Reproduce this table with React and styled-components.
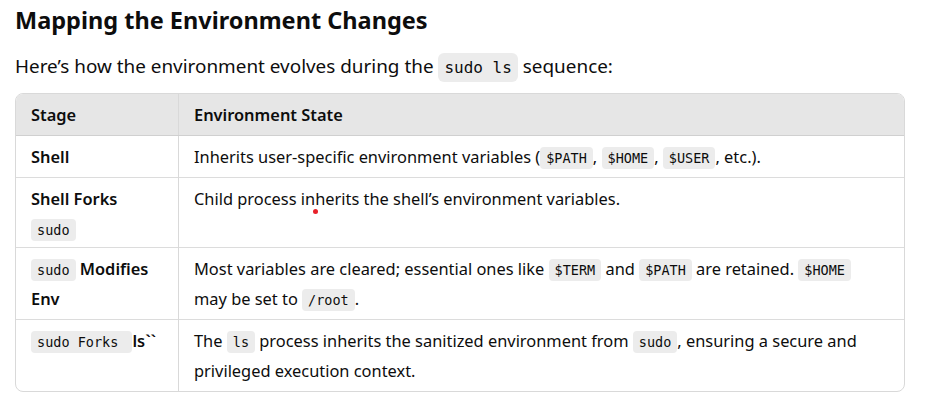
import React from 'react';
import styled, { createGlobalStyle } from 'styled-components';

const GlobalStyle = createGlobalStyle`
  html, body {
    margin: 0;
    padding: 0;
    background: #fff;
  }
  body {
    font-family: "Noto Sans", "Open Sans", sans-serif;
    color: #0d0d0d;
  }
`;

const rows = [
  {
    stage: [<b key="a">Shell</b>],
    state: [
      'Inherits user-specific environment variables (',
      { code: '$PATH' },
      ', ',
      { code: '$HOME' },
      ', ',
      { code: '$USER' },
      ', etc.).',
    ],
  },
  {
    tight: true,
    stage: [<b key="a">Shell Forks </b>, { code: 'sudo' }],
    state: ["Child process inherits the shell\u2019s environment variables."],
  },
  {
    stage: [{ code: 'sudo' }, <b key="b"> Modifies Env</b>],
    state: [
      'Most variables are cleared; essential ones like ',
      { code: '$TERM' },
      ' and ',
      { code: '$PATH' },
      ' are retained. ',
      { code: '$HOME' },
      ' may be set to ',
      { code: '/root' },
      '.',
    ],
  },
  {
    stage: [{ code: 'sudo Forks ' }, <b key="b">ls``</b>],
    state: [
      'The ',
      { code: 'ls' },
      ' process inherits the sanitized environment from ',
      { code: 'sudo' },
      ', ensuring a secure and privileged execution context.',
    ],
  },
];

function Rich({ parts }) {
  return parts.map((p, i) =>
    p && p.code !== undefined ? <Code key={i}>{p.code}</Code> : <React.Fragment key={i}>{p}</React.Fragment>
  );
}

export default function App() {
  return (
    <Page>
      <GlobalStyle />
      <Title>Mapping the Environment Changes</Title>
      <Lead>
        Here’s how the environment evolves during the <Code $big>sudo ls</Code> sequence:
      </Lead>
      <TableWrap>
        <Table>
          <thead>
            <tr>
              <Th $first>Stage</Th>
              <Th>Environment State</Th>
            </tr>
          </thead>
          <tbody>
            {rows.map((r, i) => (
              <tr key={i}>
                <Td $first $tight={r.tight}>
                  <Rich parts={r.stage} />
                </Td>
                <Td $tight={r.tight}>
                  <Rich parts={r.state} />
                </Td>
              </tr>
            ))}
          </tbody>
        </Table>
      </TableWrap>
      <Dot />
    </Page>
  );
}

const Page = styled.div`
  position: relative;
  width: 925px;
  height: 407px;
  padding: 5px 20px 0 15px;
  box-sizing: border-box;
  overflow: hidden;
`;

const Title = styled.h2`
  margin: 0;
  font-size: 23.5px;
  font-weight: 700;
  line-height: 30px;
`;

const Lead = styled.p`
  margin: 16px 0 12px;
  font-size: 18.9px;
  line-height: 30px;
`;

const TableWrap = styled.div`
  border: 1px solid #d9d9d9;
  border-radius: 8px;
  overflow: hidden;
`;

const Table = styled.table`
  width: 100%;
  border-collapse: collapse;
  font-size: 16.4px;
  line-height: 30px;
`;

const Th = styled.th`
  text-align: left;
  font-weight: 600;
  background: #e6e6e6;
  padding: 6px 15px 5px;
  width: ${({ $first }) => ($first ? '132px' : 'auto')};
  border-left: ${({ $first }) => ($first ? 'none' : '1px solid #d9d9d9')};
  border-bottom: 1px solid #d0d0d0;
`;

const Td = styled.td`
  vertical-align: top;
  padding: 6px ${({ $first }) => ($first ? '15px' : '24px')}
    ${({ $tight }) => ($tight ? '3px' : '5px')} 15px;
  border-left: ${({ $first }) => ($first ? 'none' : '1px solid #d9d9d9')};
  border-top: 1px solid #dcdcdc;
  tr:first-child > & {
    border-top: none;
  }
  b {
    font-weight: 600;
  }
`;

const Code = styled.code`
  font-family: "DejaVu Sans Mono", "Liberation Mono", monospace;
  font-size: ${({ $big }) => ($big ? '16px' : '13.5px')};
  line-height: 1;
  background: #ececec;
  border-radius: ${({ $big }) => ($big ? '6px' : '4px')};
  padding: ${({ $big }) => ($big ? '5px 6px' : '3px 6px')};
`;

const Dot = styled.span`
  position: absolute;
  left: 313px;
  top: 209px;
  width: 5px;
  height: 5px;
  border-radius: 50%;
  background: #e8202a;
`;
